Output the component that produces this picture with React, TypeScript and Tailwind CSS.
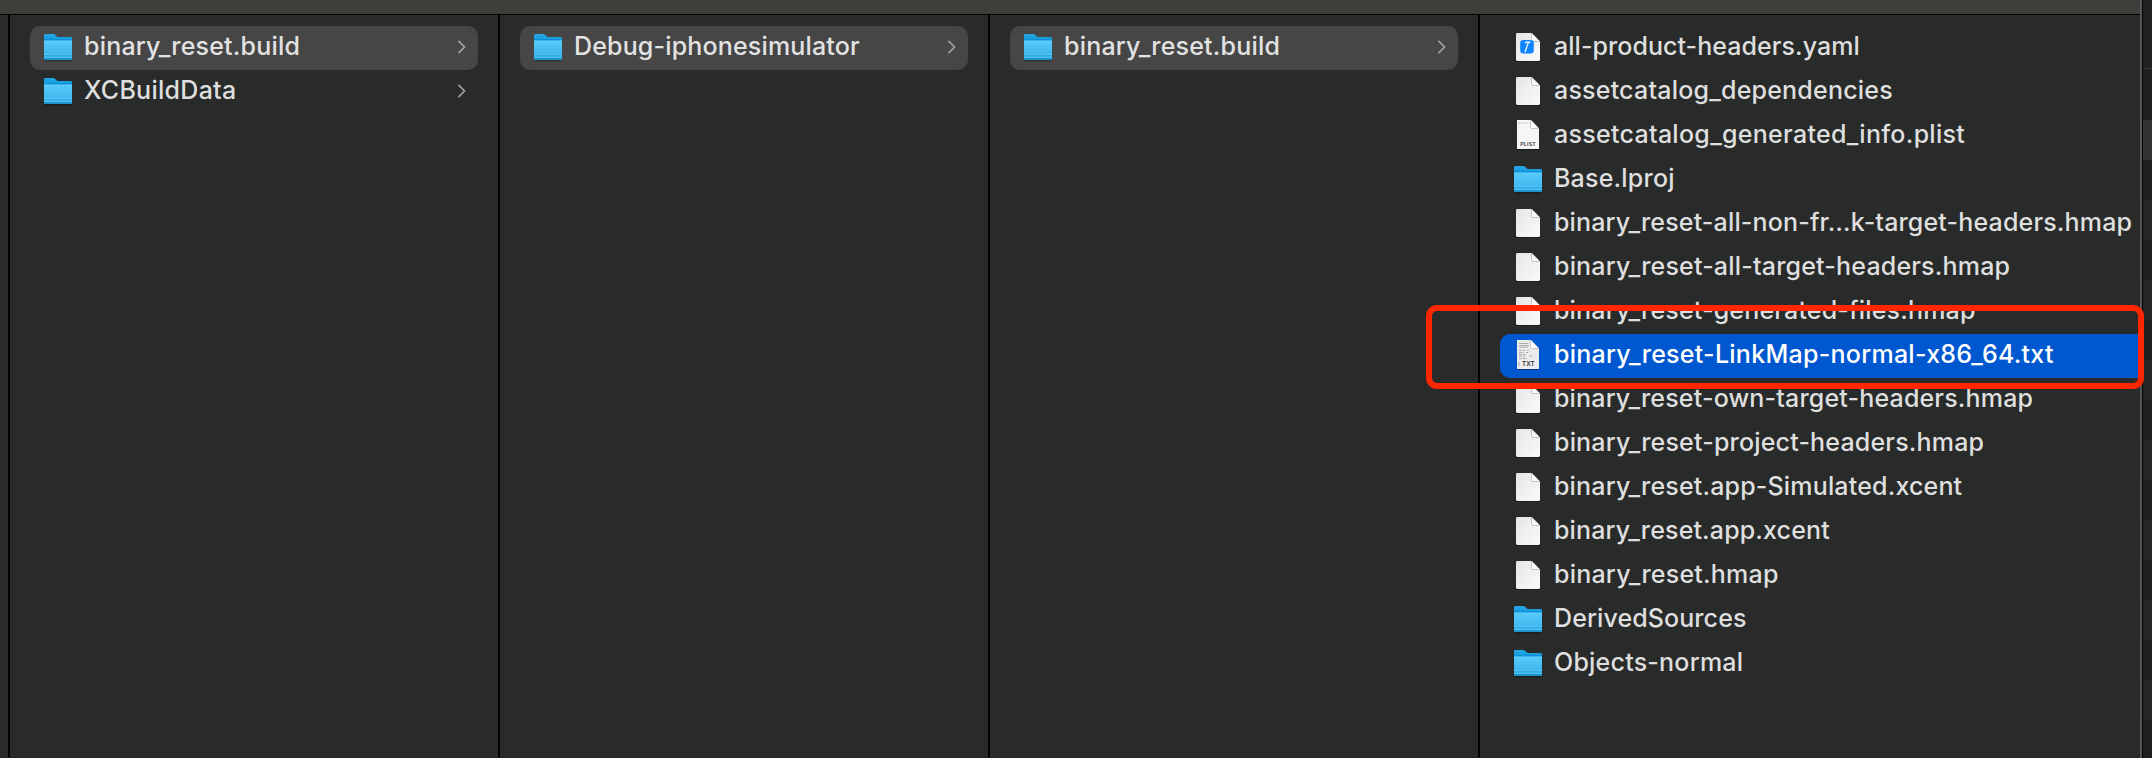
type Kind = "folder" | "doc" | "yaml" | "plist" | "txt";

interface Item {
  name: string;
  kind: Kind;
  tracking: string;
  state?: "path" | "active";
  arrow?: boolean;
}

const columns: Item[][] = [
  [
    { name: "binary_reset.build", kind: "folder", tracking: "tracking-[0.2px]", state: "path", arrow: true },
    { name: "XCBuildData", kind: "folder", tracking: "tracking-[0.28px]", arrow: true },
  ],
  [{ name: "Debug-iphonesimulator", kind: "folder", tracking: "tracking-[0.16px]", state: "path", arrow: true }],
  [{ name: "binary_reset.build", kind: "folder", tracking: "tracking-[0.2px]", state: "path", arrow: true }],
];

const files: Item[] = [
  { name: "all-product-headers.yaml", kind: "yaml", tracking: "tracking-[0.05px]" },
  { name: "assetcatalog_dependencies", kind: "doc", tracking: "tracking-[0.21px]" },
  { name: "assetcatalog_generated_info.plist", kind: "plist", tracking: "tracking-[0.289px]" },
  { name: "Base.lproj", kind: "folder", tracking: "tracking-[0.2px]" },
  { name: "binary_reset-all-non-fr…k-target-headers.hmap", kind: "doc", tracking: "tracking-[0.159px]" },
  { name: "binary_reset-all-target-headers.hmap", kind: "doc", tracking: "tracking-[0.183px]" },
  { name: "binary_reset-generated-files.hmap", kind: "doc", tracking: "tracking-[0.17px]" },
  { name: "binary_reset-LinkMap-normal-x86_64.txt", kind: "txt", tracking: "tracking-[0.263px]", state: "active" },
  { name: "binary_reset-own-target-headers.hmap", kind: "doc", tracking: "tracking-[0.164px]" },
  { name: "binary_reset-project-headers.hmap", kind: "doc", tracking: "tracking-[0.184px]" },
  { name: "binary_reset.app-Simulated.xcent", kind: "doc", tracking: "tracking-[0.169px]" },
  { name: "binary_reset.app.xcent", kind: "doc", tracking: "tracking-[0.142px]" },
  { name: "binary_reset.hmap", kind: "doc", tracking: "tracking-[0.218px]" },
  { name: "DerivedSources", kind: "folder", tracking: "tracking-[0.1px]" },
  { name: "Objects-normal", kind: "folder", tracking: "tracking-[0.22px]" },
];

const stripes = Array.from({ length: 15 }, (_, i) => i);

function Gradients() {
  return (
    <svg className="absolute size-0" aria-hidden="true">
      <defs>
        <linearGradient id="folder-front" x1="0" y1="0" x2="0" y2="1">
          <stop offset="0" stopColor="#62d0fb" />
          <stop offset="0.15" stopColor="#55c6f8" />
          <stop offset="1" stopColor="#32b2ea" />
        </linearGradient>
        <linearGradient id="folder-back" x1="0" y1="0" x2="0" y2="1">
          <stop offset="0" stopColor="#27a8e6" />
          <stop offset="1" stopColor="#0590d8" />
        </linearGradient>
        <linearGradient id="sheet" x1="0" y1="0" x2="1" y2="1">
          <stop offset="0" stopColor="#e6e6e6" />
          <stop offset="1" stopColor="#fafafa" />
        </linearGradient>
      </defs>
    </svg>
  );
}

function FolderIcon() {
  return (
    <svg viewBox="0 0 28 44" className="h-11 w-7 shrink-0">
      <rect x="0.5" y="32" width="27" height="3.4" rx="1.5" fill="#000" opacity="0.28" />
      <path d="M0 9.4Q0 8 1.4 8H9.3Q10.3 8 11 8.7L12.3 10.1Q13 11 14.2 11H26.6Q28 11 28 12.4V18H0Z" fill="url(#folder-back)" />
      <path d="M0 14.2H28V32.6Q28 34 26.6 34H1.4Q0 34 0 32.6Z" fill="url(#folder-front)" />
      <rect x="0" y="13.4" width="28" height="0.9" fill="#0486cc" opacity="0.75" />
      <rect x="0" y="28" width="28" height="1" fill="#6bcdf4" opacity="0.6" />
      <rect x="0" y="29" width="28" height="1" fill="#2a9fd6" opacity="0.6" />
      <rect x="0" y="31" width="28" height="1" fill="#6bcdf4" opacity="0.45" />
      <path d="M0 32H28V32.7Q28 34 26.6 34H1.4Q0 34 0 32.7Z" fill="#1b93cd" />
    </svg>
  );
}

function SheetIcon({ kind }: { kind: Kind }) {
  const labelled = kind === "plist" || kind === "txt";
  return (
    <svg viewBox="0 0 28 44" className="h-11 w-7 shrink-0">
      {labelled ? (
        <>
          <path d="M3 7H17.5L25 15V36H3Z" fill="#000" opacity="0.35" />
          <path d="M3 6H17L25 14.4V35H3Z" fill={kind === "txt" ? "#ececec" : "#f6f6f6"} />
          <path d="M16.6 6L25 14.6H17.6Q16.6 14.6 16.6 13.4Z" fill="#fff" />
          <path d="M16.6 6V13.4Q16.6 14.6 17.8 14.6H25" fill="none" stroke="#bdbdbd" strokeWidth="0.9" />
        </>
      ) : (
        <>
          <path d="M2 10H18L26 16V34.6Q26 36 24.6 36H3.4Q2 36 2 34.6Z" fill="#000" opacity="0.3" />
          <path d="M2 8.4Q2 7 3.4 7H17.6L26 15.4V33.6Q26 35 24.6 35H3.4Q2 35 2 33.6Z" fill="url(#sheet)" />
          <path d="M17.5 7L26 15.5H18.8Q17.5 15.5 17.5 14.2Z" fill="#fbfbfb" />
          <path d="M17.5 7V14.2Q17.5 15.5 18.8 15.5H26" fill="none" stroke="#b5b5b5" strokeWidth="0.8" />
        </>
      )}
      {kind === "yaml" && (
        <>
          <rect x="6.2" y="14" width="13.6" height="13.6" rx="3" fill="#0f84ff" />
          <path d="M14.3 16.8L11.2 25.6" stroke="#e8f3ff" strokeWidth="1.4" strokeLinecap="round" />
          <path d="M11.4 16.6Q13.6 15.4 15.8 16.2" stroke="#e8f3ff" strokeWidth="1.5" fill="none" strokeLinecap="round" />
        </>
      )}
      {kind === "plist" && (
        <>
          <path d="M5 10V9H15" fill="none" stroke="#b9b9b9" strokeWidth="0.9" strokeDasharray="2 0.8" />
          <text x="14.1" y="31.8" textAnchor="middle" fontSize="5.2" fontWeight="600" letterSpacing="0.2" fill="#333" fontFamily="Inter, sans-serif">
            PLIST
          </text>
        </>
      )}
      {kind === "txt" && (
        <>
          <g stroke="#8f8f8f" strokeWidth="0.9" opacity="0.75">
            <path d="M5 9.5H14.5M5 11.5H15M5 13.2H14" />
            <path d="M5 16.5H11M13 16.5H15M5 18.5H10M12 18.5H14M5 20.5H12M5 22.2H11M5 24.6H13M15 22.2H19" strokeDasharray="3 0.7" />
            <path d="M5 28V32" />
          </g>
          <text x="14.4" y="32.2" textAnchor="middle" fontSize="6.2" fontWeight="600" letterSpacing="0.2" fill="#333" fontFamily="Inter, sans-serif">
            TXT
          </text>
        </>
      )}
    </svg>
  );
}

function Row({ item }: { item: Item }) {
  const skin =
    item.state === "active"
      ? "rounded-l-[10px] bg-[#0058d0] text-white"
      : item.state === "path"
        ? "rounded-[10px] bg-[#464646] text-[#e2e2e2]"
        : "text-[#dfdfdf]";
  return (
    <div className={`flex h-11 items-center pl-3.5 ${skin}`}>
      {item.kind === "folder" ? <FolderIcon /> : <SheetIcon kind={item.kind} />}
      <span className={`ml-3 flex-1 pb-[3px] whitespace-nowrap text-[25px] leading-[41px] font-medium ${item.tracking}`}>{item.name}</span>
      {item.arrow && (
        <svg viewBox="0 0 8 14" className="mr-3 mb-0.5 h-3.5 w-2 shrink-0" fill="none" stroke="#a3a3a3" strokeWidth="1.7" strokeLinecap="round" strokeLinejoin="round">
          <path d="M1 1.4L6.6 7L1 12.6" />
        </svg>
      )}
    </div>
  );
}

export default function App() {
  return (
    <div className="relative flex h-[758px] w-[2152px] overflow-hidden bg-[#1e1e1e] font-['Inter','Liberation_Sans',sans-serif]">
      <Gradients />
      <div className="flex w-[2140px] shrink-0 flex-col bg-[#292b2a]">
        <div className="h-3.5 bg-[#3c3e3a]" />
        <div className="h-px bg-black" />
        <div className="flex flex-1">
          <div className="w-2" />
          {columns.map((items, i) => (
            <div key={i} className="w-[490px] border-l-2 border-black pt-[11px] pr-5 pl-5">
              {items.map((item) => (
                <Row key={item.name} item={item} />
              ))}
            </div>
          ))}
          <div className="flex-1 border-l-2 border-black pt-[11px] pl-5">
            {files.map((item) => (
              <Row key={item.name} item={item} />
            ))}
          </div>
        </div>
        <div className="h-px bg-[#281e21]" />
      </div>
      <div className="w-0.5 shrink-0 bg-[#565756]" />
      <div className="w-px shrink-0 bg-black" />
      <div className="flex flex-1 flex-col">
        <div className="h-[68px] shrink-0 bg-[#212121]" />
        <div className="h-px shrink-0 bg-[#383838]" />
        <div className="h-[51px] shrink-0 bg-[#1f1f1f]" />
        <div className="h-10 shrink-0 bg-[#303231]" />
        {stripes.map((i) => (
          <div key={i} className={`h-10 shrink-0 ${i % 2 ? "bg-[#242625]" : "bg-[#1e1e1e]"}`} />
        ))}
      </div>
      <div className="absolute top-[305px] left-[1426px] h-[84px] w-[718px] rounded-[11px] border-[6px] border-[#ff2600]" />
    </div>
  );
}
